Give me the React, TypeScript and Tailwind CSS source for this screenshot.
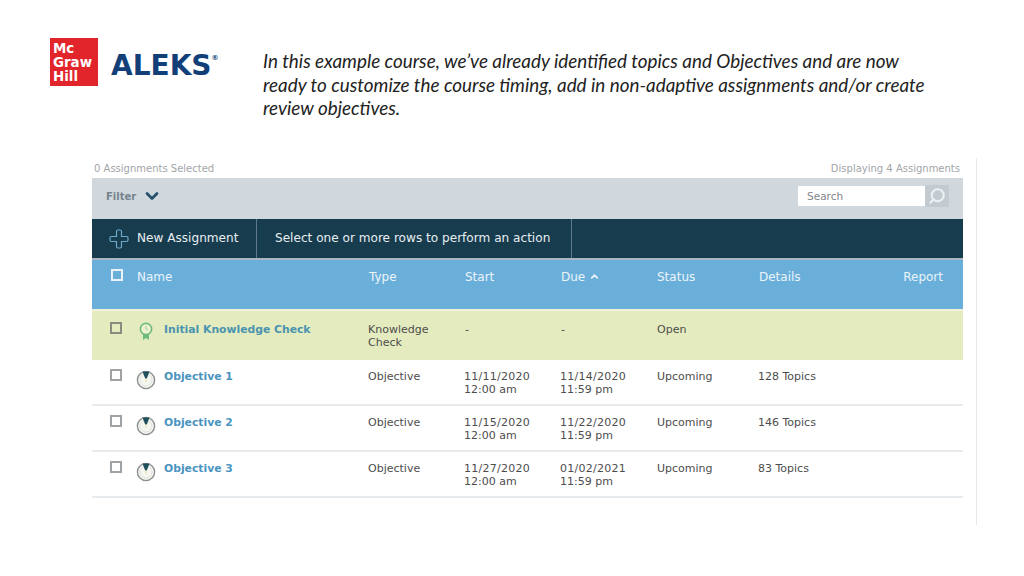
import { ChevronDown, ChevronUp, Search } from "lucide-react";

const rows = [
  { name: "Objective 1", start: ["11/11/2020", "12:00 am"], due: ["11/14/2020", "11:59 pm"], details: "128 Topics" },
  { name: "Objective 2", start: ["11/15/2020", "12:00 am"], due: ["11/22/2020", "11:59 pm"], details: "146 Topics" },
  { name: "Objective 3", start: ["11/27/2020", "12:00 am"], due: ["01/02/2021", "11:59 pm"], details: "83 Topics" },
];

function Checkbox({ className }: { className: string }) {
  return <span className={`block w-[12px] h-[12px] border-2 ${className}`} />;
}

function ObjectiveIcon() {
  return (
    <svg width="20" height="20" viewBox="0 0 20 20" className="shrink-0">
      <circle cx="10" cy="10" r="8.6" fill="#f6f6f0" stroke="#8b9090" strokeWidth="1.4" />
      <circle cx="10" cy="10" r="6" fill="none" stroke="#dfe2df" strokeWidth="1" />
      <path d="M6.5 1.6 L13.5 1.6 L10.8 8.5 L9.2 8.5 Z" fill="#1f4f5c" />
      <rect x="9.5" y="8.5" width="1" height="3.5" fill="#e4dc9a" />
    </svg>
  );
}

function RibbonIcon() {
  return (
    <svg width="20" height="20" viewBox="0 0 20 20" className="shrink-0">
      <path d="M7 13 L7 19 L10 17 L13 19 L13 13 Z" fill="#6dbb7c" />
      <circle cx="10" cy="8" r="5.6" fill="#eef2cf" stroke="#6dbb7c" strokeWidth="1.6" />
      <path d="M10 5 L10 8 L12 9" fill="none" stroke="#8ccb95" strokeWidth="0.9" />
    </svg>
  );
}

function PlusOutline() {
  return (
    <svg width="20" height="20" viewBox="0 0 20 20" className="shrink-0">
      <path
        d="M7.5 2.5 Q7.5 1 9 1 L11 1 Q12.5 1 12.5 2.5 L12.5 7.5 L17.5 7.5 Q19 7.5 19 9 L19 11 Q19 12.5 17.5 12.5 L12.5 12.5 L12.5 17.5 Q12.5 19 11 19 L9 19 Q7.5 19 7.5 17.5 L7.5 12.5 L2.5 12.5 Q1 12.5 1 11 L1 9 Q1 7.5 2.5 7.5 L7.5 7.5 Z"
        fill="none"
        stroke="#6fa9c9"
        strokeWidth="1.2"
      />
    </svg>
  );
}

function DateCell({ lines }: { lines: string[] }) {
  return (
    <div className="leading-[13px]">
      <div className="tracking-[0.25px]">{lines[0]}</div>
      <div>{lines[1]}</div>
    </div>
  );
}

export default function App() {
  return (
    <div className="w-[1024px] h-[576px] bg-white overflow-hidden font-['DejaVu_Sans',sans-serif]">
      <header className="flex pt-[38px] pl-[50px] h-[158px]">
        <div className="w-[48px] h-[48px] bg-[#e2252b] text-white font-bold text-[13.4px] leading-[14px] pl-[3px] pt-[4px]">
          <div>Mc</div>
          <div>Graw</div>
          <div>Hill</div>
        </div>
        <div className="ml-[13px] mt-[10px] h-[32px] flex items-start text-[#123f78] font-bold text-[28px] leading-[36px] w-[106px]">
          ALEKS
          <span className="text-[7px] leading-[6px] mt-[7px]">®</span>
        </div>
        <p className="ml-[46px] mt-[11px] w-[680px] whitespace-nowrap font-['Lato',sans-serif] italic text-[18.85px] leading-[23.5px] text-[#222]">
          In this example course, we’ve already identified topics and Objectives and are now
          <br />
          ready to customize the course timing, add in non-adaptive assignments and/or create
          <br />
          review objectives.
        </p>
      </header>

      <div className="ml-[92px] w-[885px] h-[367px] pr-[13px] border-r border-[#e6e8ea]">
        <div className="flex justify-between items-center h-[20px] pl-[2px] pr-[3px] text-[10px] text-[#a2a5a8]">
          <span>0 Assignments Selected</span>
          <span>Displaying 4 Assignments</span>
        </div>

        <div className="h-[41px] bg-[#d0d8de] flex items-center justify-between pl-[14px] pr-[14px] pb-[5px]">
          <div className="flex items-center gap-[6px] text-[10px] font-bold text-[#76838d]">
            Filter
            <ChevronDown size={20} strokeWidth={3.2} className="text-[#24506a]" />
          </div>
          <div className="flex items-center">
            <div className="w-[127px] h-[20px] bg-white pl-[9px] text-[10.5px] leading-[20px] text-[#83878a]">Search</div>
            <div className="w-[24px] h-[22px] bg-[#c4cbd0] flex items-center justify-center">
              <Search size={18} strokeWidth={2.6} className="text-[#eef1f3] -scale-x-100" />
            </div>
          </div>
        </div>

        <div className="h-[41px] bg-[#173c4e] border-b-[2px] border-[#a9b6bf] flex items-center text-[12.1px] text-[#e8eef1]">
          <div className="w-[165px] h-full flex items-center pl-[17px] gap-[8px] border-r border-[#5f7a88]">
            <PlusOutline />
            New Assignment
          </div>
          <div className="w-[315px] h-full flex items-center pl-[18px] border-r border-[#5f7a88]">
            Select one or more rows to perform an action
          </div>
        </div>

        <div className="h-[49px] bg-[#6aafd9] grid grid-cols-[277px_96px_96px_96px_102px_1fr] pt-[9px] text-[12px] leading-[16px] text-[#eaf4fa]">
          <div className="flex items-start pl-[19px] gap-[14px]">
            <Checkbox className="border-[#e8f2f8]" />
            Name
          </div>
          <div>Type</div>
          <div>Start</div>
          <div className="flex items-start gap-[4px]">
            Due
            <ChevronUp size={11} strokeWidth={4} className="mt-[2px]" />
          </div>
          <div>Status</div>
          <div className="flex justify-between pr-[20px]">
            <span>Details</span>
            <span>Report</span>
          </div>
        </div>

        <div className="h-[51px] bg-[#e4ebbe] border-t-2 border-[#eef0dc] grid grid-cols-[276px_96px_96px_96px_102px_1fr] pt-[12px] text-[11px] leading-[13px] text-[#4d4d4d]">
          <div className="flex items-start pl-[18px]">
            <Checkbox className="border-[#8a8c80] mt-[-1px]" />
            <span className="ml-[14px] mt-[-2px]"><RibbonIcon /></span>
            <span className="ml-[8px] text-[10.8px] font-bold text-[#4a94b0]">Initial Knowledge Check</span>
          </div>
          <div>Knowledge<br />Check</div>
          <div className="pl-px">-</div>
          <div className="pl-px">-</div>
          <div className="pl-px">Open</div>
          <div />
        </div>

        {rows.map((row) => (
          <div
            key={row.name}
            className="h-[46px] border-b-2 border-[#e8ebee] grid grid-cols-[276px_96px_96px_96px_102px_1fr] pt-[10px] text-[11px] leading-[13px] text-[#4d4d4d]"
          >
            <div className="flex items-start pl-[18px]">
              <Checkbox className="border-[#a0a3a5] mt-[-1px]" />
              <span className="ml-[14px]"><ObjectiveIcon /></span>
              <span className="ml-[8px] text-[10.8px] font-bold text-[#4a94c0]">{row.name}</span>
            </div>
            <div>Objective</div>
            <DateCell lines={row.start} />
            <DateCell lines={row.due} />
            <div className="pl-px">Upcoming</div>
            <div>{row.details}</div>
          </div>
        ))}
      </div>
    </div>
  );
}
